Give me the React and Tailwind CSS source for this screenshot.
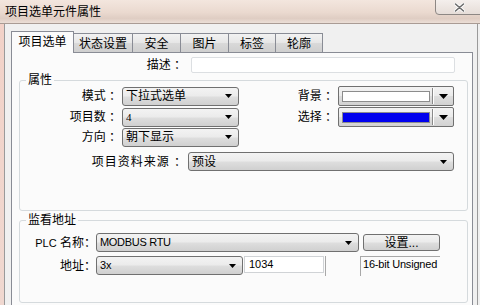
import React from "react";

const FONT = "font-['Liberation_Sans','Noto_Sans_CJK_SC',sans-serif]";

function Arrow({ className }) {
  return (
    <svg aria-hidden className={`shrink-0 ${className ?? ""}`} width="7" height="4" viewBox="0 0 7 4">
      <path d="M0 0h7L3.5 4z" fill="#000" />
    </svg>
  );
}

// win7 style combo box
function Combo({ className, children, textClass }) {
  return (
    <div
      className={`flex items-center justify-between rounded-[3px] border border-[#707070] bg-[linear-gradient(#f3f3f3,#ebebeb_48%,#dedede_52%,#d0d0d0)] pl-[3px] pr-[6px] ${className ?? ""}`}
    >
      <span className={`truncate text-black ${textClass ?? "text-[12px]"}`}>{children}</span>
      <Arrow />
    </div>
  );
}

function ColorBox({ swatch }) {
  return (
    <div className="flex h-[20px] w-[116px] items-center rounded-[2px] border border-[#707070] bg-[linear-gradient(#f3f3f3,#ebebeb_48%,#dedede_52%,#d2d2d2)] pl-[3px]">
      <div className={`h-[11px] w-[88px] border border-[#8c8c8c] ${swatch}`} />
      <div className="ml-[2px] h-[16px] w-px bg-[#8a8a8a]" />
      <div className="h-[16px] w-px bg-white" />
      <svg aria-hidden className="ml-[5px]" width="9" height="5" viewBox="0 0 9 5">
        <path d="M0 0h9L4.5 5z" fill="#000" />
      </svg>
    </div>
  );
}

function Group({ title, className, children }) {
  return (
    <div className={`relative ml-[7px] w-[449px] rounded-[3px] border border-[#d5dadd] ${className ?? ""}`}>
      <span className="absolute left-[6px] top-[-8px] bg-[#fbfbfb] px-[2px] text-[12px] leading-[14px] text-black">
        {title}
      </span>
      {children}
    </div>
  );
}

const TABS = ["项目选单", "状态设置", "安全", "图片", "标签", "轮廓"];
const TAB_W = ["w-[63px]", "w-[60px]", "w-[49px]", "w-[49px]", "w-[48px]", "w-[48px]"];

export default function App() {
  return (
    <div className={`relative h-[305px] w-[480px] overflow-hidden bg-[#f0f0f0] ${FONT}`}>
      {/* title bar */}
      <div className="relative flex h-[23px] items-center bg-[linear-gradient(#f3e6de,#ead9cf_55%,#dfcdc3_80%,#ebded6)] pl-[5px]">
        <span className="text-[12px] leading-none text-black">项目选单元件属性</span>
        <div className="absolute right-[-4px] top-[-1px] flex h-[16px] w-[49px] items-center justify-center rounded-b-[4px] border border-[#8d8784] bg-[linear-gradient(#f4efec,#e6ddd8)]">
          <svg aria-hidden width="11" height="9" viewBox="0 0 11 9">
            <path d="M1.5 1l8 7M9.5 1l-8 7" stroke="#fff" strokeWidth="3.2" strokeLinecap="round" />
            <path d="M1.5 1l8 7M9.5 1l-8 7" stroke="#6b6b6b" strokeWidth="1.6" strokeLinecap="round" />
          </svg>
        </div>
      </div>
      <div className="h-px bg-[#a99b94]" />

      {/* dialog body */}
      <div className="flex h-[281px]">
        <div className="w-[4px] bg-[linear-gradient(#f2d2c8,#f0d8d0)]" />
        <div className="w-px bg-[#9a9a9a]" />
        <div className="flex-1 pl-[6px] pt-[7px]">
          {/* tabs */}
          <div className="flex h-[21px] items-end">
            {TABS.map((t, i) =>
              i === 0 ? (
                <div
                  key={t}
                  className={`relative z-10 -mb-px flex h-[22px] items-center justify-center border border-b-0 border-[#898c95] bg-[#fbfbfb] pb-[1px] text-[12px] text-black ${TAB_W[i]}`}
                >
                  {t}
                </div>
              ) : (
                <div
                  key={t}
                  className={`-ml-px flex h-[19px] items-center justify-center border border-b-0 border-[#898c95] bg-[linear-gradient(#f2f2f2,#e6e6e6_50%,#d9d9d9_52%,#cfcfcf)] pt-[2px] text-[12px] text-black ${TAB_W[i]}`}
                >
                  {t}
                </div>
              )
            )}
          </div>

          {/* tab panel */}
          <div className="h-[270px] w-[462px] border border-[#898c95] bg-[#fbfbfb] pt-[4px]">
            <div className="flex h-[16px] items-center">
              <span className="w-[174px] text-right text-[12px] text-black">描述 ：</span>
              <div className="ml-[5px] h-[16px] w-[264px] rounded-[2px] border border-[#dcdfe2] bg-white" />
            </div>

            <Group title="属性" className="mt-[7px] h-[131px] pt-[5px]">
              <div className="flex h-[20px] items-center">
                <span className="w-[102px] pr-[1px] text-right text-[12px] text-black">模式 ：</span>
                <Combo className="h-[19px] w-[117px]">下拉式选单</Combo>
                <span className="w-[99px] pr-[1px] text-right text-[12px] text-black">背景 ：</span>
                <ColorBox swatch="bg-white" />
              </div>
              <div className="mt-px flex h-[20px] items-center">
                <span className="w-[102px] pr-[1px] text-right text-[12px] text-black">项目数 ：</span>
                <Combo className="h-[19px] w-[117px]" textClass="text-[11px] font-['Liberation_Serif',serif]">
                  4
                </Combo>
                <span className="w-[99px] pr-[1px] text-right text-[12px] text-black">选择 ：</span>
                <ColorBox swatch="bg-[#0000ee]" />
              </div>
              <div className="flex h-[20px] items-center">
                <span className="w-[102px] pr-[1px] text-right text-[12px] text-black">方向 ：</span>
                <Combo className="h-[19px] w-[117px]">朝下显示</Combo>
              </div>
              <div className="mt-[5px] flex h-[19px] items-center">
                <span className="w-[168px] pr-[1px] text-right text-[12px] tracking-[1px] text-black">项目资料来源 ：</span>
                <Combo className="h-[19px] w-[266px]">预设</Combo>
              </div>
            </Group>

            <Group title="监看地址" className="mt-[9px] h-[83px] pt-[12px]">
              <div className="flex h-[19px] items-center">
                <span className="w-[76px] text-right text-[12px] text-black">
                  <span className="text-[11px]">PLC</span> 名称：
                </span>
                <Combo className="h-[19px] w-[263px]" textClass="text-[11px] tracking-[-0.3px]">
                  MODBUS RTU
                </Combo>
                <div className="ml-[4px] flex h-[17px] w-[77px] items-center justify-center rounded-[3px] border border-[#707070] bg-[linear-gradient(#f3f3f3,#ebebeb_48%,#dedede_52%,#d0d0d0)] text-[12px] text-black">
                  设置...
                </div>
              </div>
              <div className="mt-[4px] flex h-[20px] items-start">
                <span className="w-[76px] text-right text-[12px] leading-[20px] text-black">地址：</span>
                <Combo className="h-[19px] w-[147px]" textClass="text-[11px]">
                  3x
                </Combo>
                <div className="ml-[1px] flex h-[17px] w-[80px] items-center border border-[#d0d3d6] bg-white pl-[4px] text-[11px] text-black">
                  1034
                </div>
                <div className="ml-[1px] h-[20px] w-[35px] border-l border-[#a8a8a8]" />
                <div className="h-[20px] w-[80px] whitespace-nowrap border-l border-t border-[#a8a8a8] pl-[2px] text-[11px] leading-[14px] tracking-[-0.2px] text-black">
                  16-bit Unsigned
                </div>
              </div>
            </Group>
          </div>
        </div>
        <div className="w-px bg-[#9a9a9a]" />
        <div className="w-[2px] bg-[#f0f0f0]" />
      </div>
    </div>
  );
}
